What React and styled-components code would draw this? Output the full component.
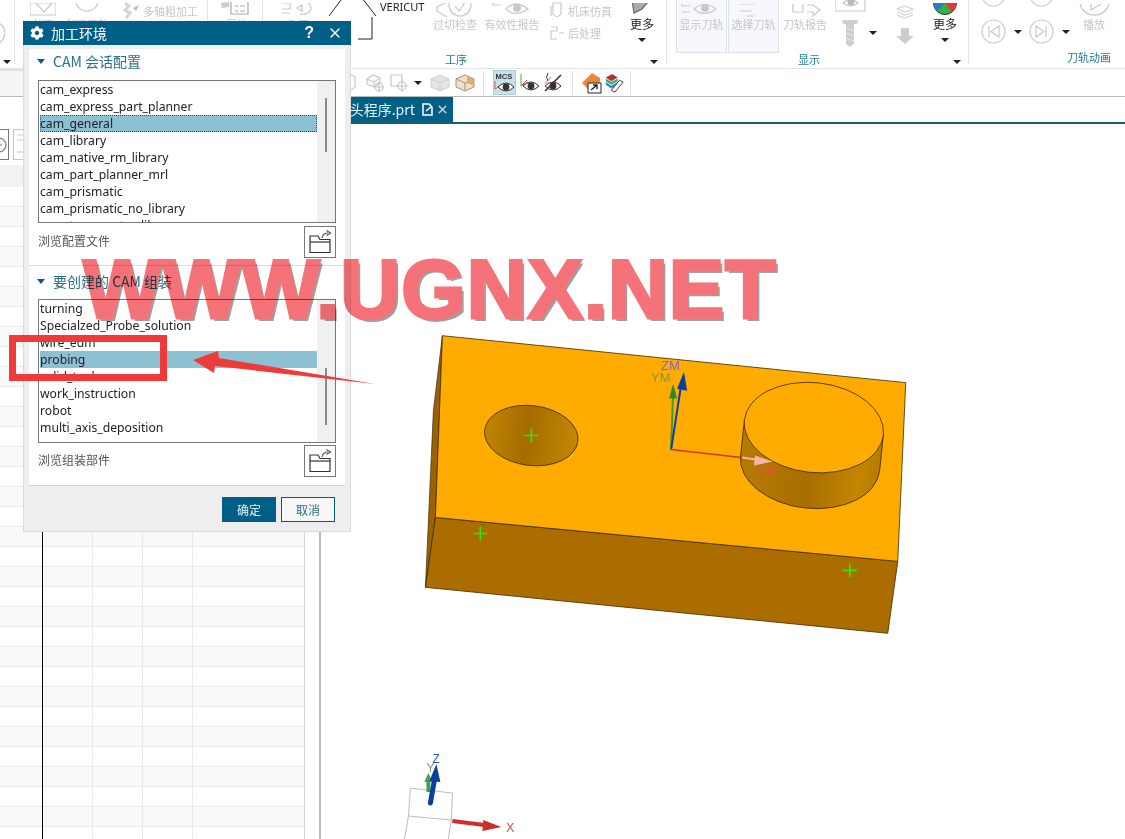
import React from 'react';
import styled, { createGlobalStyle } from 'styled-components';
import { FaCog } from 'react-icons/fa';
import { X } from 'lucide-react';

const FONT = '"Noto Sans", "Noto Sans CJK SC", sans-serif';
const CJK = '"Noto Sans CJK SC", "Noto Sans", sans-serif';

const GlobalStyle = createGlobalStyle`
  html, body { margin: 0; padding: 0; background: #fff; }
  body { font-family: ${FONT}; }
`;

const Page = styled.div`
  position: relative;
  width: 1125px;
  height: 839px;
  overflow: hidden;
  background: #fff;
  display: flex;
  flex-direction: column;
`;

/* ribbon */
const Ribbon = styled.div`
  display: flex;
  height: 68px;
  flex: none;
  overflow: hidden;
  border-bottom: 1px solid #e2e2e2;
  box-sizing: content-box;
`;
const Group = styled.div`
  position: relative;
  width: ${p => p.$w}px;
  flex: none;
  height: 64px;
  border-right: ${p => (p.$last ? 'none' : '1px solid #e4e4e4')};
  box-sizing: border-box;
  display: flex;
  flex-direction: column;
`;
const GroupBody = styled.div`
  display: flex;
  align-items: flex-end;
  height: 52px;
  padding-left: ${p => p.$pad || 0}px;
`;
const GroupLabel = styled.div`
  height: 14px;
  margin-top: 0;
  font: 11px/14px ${CJK};
  color: #1f7a94;
  padding-left: ${p => p.$x}px;
`;
const GroupCaret = styled.span`
  position: absolute;
  right: ${p => p.$r}px;
  bottom: 0;
  width: 0;
  height: 0;
  border: 4px solid transparent;
  border-top: 4px solid #222;
  border-bottom: 0;
`;
const Tool = styled.div`
  width: ${p => p.$w}px;
  margin-left: ${p => p.$ml || 0}px;
  flex: none;
  display: flex;
  flex-direction: column;
  align-items: center;
  padding-bottom: 21px;
  white-space: nowrap;
`;
const ToggledTool = styled(Tool)`
  height: 54px;
  margin-bottom: -1px;
  box-sizing: border-box;
  background: #f6f8fd;
  border: 1px solid #dde3ec;
  justify-content: flex-end;
`;
const ToolLabel = styled.span`
  font: 11px/14px ${CJK};
  color: ${p => (p.$dark ? '#1c1c1c' : '#c6c6c6')};
  white-space: nowrap;
`;
const MoreLabel = styled(ToolLabel)`
  font-size: 12px;
  color: #1c1c1c;
`;
const PlayLabel = styled(ToolLabel)`
  margin-top: 4px;
`;
const ToolStack = styled.div`
  width: ${p => p.$w}px;
  margin-left: ${p => p.$ml || 0}px;
  flex: none;
  display: flex;
  flex-direction: column;
  align-items: ${p => p.$align || 'flex-start'};
  gap: ${p => p.$gap || 0}px;
  padding-bottom: ${p => p.$pb || 0}px;
`;
const StackRow = styled.div`
  display: flex;
  align-items: center;
  gap: ${p => p.$gap || 3}px;
  white-space: nowrap;
`;
const Caret = styled.span`
  width: 0;
  height: 0;
  flex: none;
  margin-left: ${p => p.$ml || 0}px;
  margin-top: ${p => p.$mt || 0}px;
  margin-bottom: ${p => p.$mb || 0}px;
  border: 4px solid transparent;
  border-top: 4px solid #222;
  border-bottom: 0;
`;
const TextTool = styled.span`
  margin-top: 1px;
  align-self: flex-start;
  font: 11px/12px ${FONT};
  color: #1c1c1c;
`;

/* toolbar */
const Toolbar = styled.div`
  display: flex;
  align-items: center;
  height: 27px;
  flex: none;
  border-bottom: 1px solid #b9b9b9;
`;
const ToolbarLead = styled.div`
  width: 345px;
  height: 27px;
  flex: none;
  background: #f5f5f5;
  border-top: 2px solid #e2e2e2;
  box-sizing: border-box;
`;
const BarIcon = styled.span`
  width: ${p => p.$w}px;
  margin-left: ${p => p.$ml || 0}px;
  height: 25px;
  flex: none;
  display: flex;
  align-items: center;
  justify-content: center;
  box-sizing: border-box;
  background: ${p => (p.$on ? '#c7e1ea' : 'transparent')};
  border: ${p => (p.$on ? '1px solid #a9cfda' : 'none')};
`;
const BarSep = styled.span`
  width: 1px;
  height: 24px;
  margin-left: ${p => p.$ml}px;
  flex: none;
  background: #dedede;
`;

/* main area */
const Main = styled.div`
  flex: 1;
  display: flex;
  min-height: 0;
`;
const NavPanel = styled.div`
  width: 321px;
  flex: none;
  border-right: 2px solid #bcbcbc;
  box-sizing: border-box;
  display: flex;
  flex-direction: column;
  overflow: hidden;
`;
const NavTools = styled.div`
  height: 68px;
  flex: none;
  display: flex;
  align-items: flex-end;
  gap: 4px;
  padding-bottom: 5px;
  box-sizing: border-box;
  margin-left: -22px;
`;
const NavButton = styled.span`
  width: ${p => p.$w}px;
  height: 31px;
  box-sizing: border-box;
  border: 1px solid ${p => p.$c};
  display: flex;
  align-items: center;
  justify-content: center;
`;
const NavHeader = styled.div`
  height: 22px;
  flex: none;
  background: #f2f2f2;
`;
const TreeRow = styled.div`
  display: grid;
  grid-template-columns: 43px 50px 50px 50px 112px;
  height: 20px;
  flex: none;
  width: 305px;
  box-sizing: border-box;
  background: ${p => (p.$odd ? '#f9f9f9' : '#fff')};
  border-bottom: 1px solid #e9e9e9;
  border-right: 1px solid #d6d6d6;
`;
const TreeCell = styled.div`
  border-right: 1px solid ${p => (p.$black ? '#000' : '#e9e9e9')};
  margin-bottom: -1px;
  &:last-child { border-right: none; }
`;
const Viewport = styled.div`
  flex: 1;
  display: flex;
  flex-direction: column;
  min-width: 0;
`;
const TabBar = styled.div`
  height: 25px;
  flex: none;
  border-bottom: 2px solid #17616f;
  box-sizing: content-box;
  display: flex;
`;
const FileTab = styled.div`
  width: 132px;
  box-sizing: border-box;
  display: flex;
  align-items: center;
  justify-content: flex-end;
  gap: 3px;
  padding-right: 4px;
  background: #005f87;
  color: #eaf3f6;
  font: 14px/25px ${CJK};
`;
const TabName = styled.span`
  margin-right: 4px;
  white-space: nowrap;
`;
const ModelCanvas = styled.svg`
  display: block;
  width: 804px;
  height: 716px;
`;

/* dialog */
const Dialog = styled.div`
  position: absolute;
  left: 23px;
  top: 21px;
  width: 328px;
  height: 511px;
  box-sizing: border-box;
  background: #eeeeee;
  border: 1px solid #dcdcdc;
  border-top: none;
  display: flex;
  flex-direction: column;
`;
const TitleBar = styled.div`
  height: 24px;
  margin: 0 -1px;
  flex: none;
  background: #005f87;
  color: #fff;
  display: flex;
  align-items: center;
  padding: 0 8px 0 7px;
  gap: 7px;
  font: 14px/24px ${CJK};
`;
const TitleText = styled.span`
  flex: 1;
`;
const HelpMark = styled.span`
  font: bold 16px/24px "Liberation Sans", sans-serif;
  margin-right: 6px;
`;
const DialogPanel = styled.div`
  margin: 4px 5px 0;
  background: #fff;
  flex: none;
  border-bottom: 1px solid #d2d2d2;
`;
const Section = styled.section`
  padding: 0 9px ${p => p.$pb}px 9px;
  border-top: ${p => (p.$divided ? '1px solid #dddddd' : 'none')};
`;
const SectionHead = styled.div`
  height: ${p => p.$h}px;
  display: flex;
  align-items: center;
  gap: 8px;
  padding-bottom: ${p => p.$pb}px;
  box-sizing: border-box;
  font: 14px/18px ${CJK};
  color: #2b7089;
`;
const Triangle = styled.span`
  width: 0;
  height: 0;
  margin-left: -1px;
  border: 4.5px solid transparent;
  border-top: 5px solid #005f87;
  border-bottom: 0;
`;
const ListBox = styled.div`
  height: ${p => p.$h}px;
  box-sizing: border-box;
  border: 1px solid #767676;
  display: flex;
  overflow: hidden;
`;
const ListRows = styled.div`
  flex: 1;
  padding: 0 0 0 1px;
  min-width: 0;
`;
const ListRow = styled.div`
  height: 17px;
  padding-top: 1px;
  box-sizing: border-box;
  font: 12.2px/16px ${FONT};
  color: #222;
  white-space: nowrap;
  background: ${p => (p.$selected ? '#8cc0d2' : 'transparent')};
  outline: ${p => (p.$focus ? '1px dotted #2c5563' : 'none')};
  outline-offset: -1px;
`;
const ScrollTrack = styled.div`
  width: 18px;
  flex: none;
  background: #f0f0f0;
  display: flex;
  flex-direction: column;
  align-items: center;
`;
const ScrollThumb = styled.div`
  width: 2px;
  margin-top: ${p => p.$top}px;
  height: ${p => p.$h}px;
  background: #8a8a8a;
`;
const BrowseRow = styled.div`
  display: flex;
  align-items: center;
  justify-content: space-between;
  padding-top: ${p => p.$top}px;
  color: #555;
`;
const BrowseLabel = styled.span`
  font: 12px/16px ${CJK};
  margin-top: -2px;
`;
const BrowseButton = styled.span`
  width: 32px;
  height: 32px;
  box-sizing: border-box;
  border: 1px solid #777;
  display: flex;
  align-items: center;
  justify-content: center;
`;
const DialogFooter = styled.div`
  display: flex;
  justify-content: flex-end;
  gap: 5px;
  padding: 11px 15px 0 0;
`;
const DialogButton = styled.button`
  width: 54px;
  height: 25px;
  padding: 0;
  box-sizing: border-box;
  border: 1px solid #005f87;
  background: ${p => (p.$primary ? '#005f87' : '#f7f7f7')};
  color: ${p => (p.$primary ? '#e8f1f5' : '#2f6d84')};
  font: 12px/22px ${CJK};
`;

/* annotations painted over the screenshot */
const Watermark = styled.div`
  position: absolute;
  left: 83px;
  top: 248px;
  font: bold 83px/83px "Liberation Sans", sans-serif;
  letter-spacing: 0.95px;
  color: #f47278;
  -webkit-text-stroke: 3px #f47278;
  text-shadow: 3px 3px 0 #a0a0a0;
  white-space: nowrap;
  mix-blend-mode: multiply;
`;
const RedFrame = styled.div`
  position: absolute;
  left: 9px;
  top: 335px;
  width: 158px;
  height: 46px;
  box-sizing: border-box;
  border: 7px solid #ee3a38;
`;
const RedArrow = styled.svg`
  position: absolute;
  left: 190px;
  top: 348px;
  width: 190px;
  height: 40px;
`;
const AnimationRow = styled.div`
  position: absolute;
  left: 12px;
  top: 0;
  display: flex;
  align-items: flex-start;
`;
const AnimationCol = styled.div`
  display: flex;
  flex-direction: column;
  align-items: flex-start;
  gap: 12px;
  margin-top: -8px;
  width: ${p => p.$w}px;
`;
const PlayCol = styled.div`
  display: flex;
  flex-direction: column;
  align-items: center;
  width: 30px;
`;
const PlayIcon = styled.div`
  height: 13px;
`;
const CaretRow = styled.div`
  display: flex;
  align-items: center;
  gap: 8px;
`;

const G = '#c9c9c9';

const Svg = ({ w, h, children, vb }) => (
  <svg width={w} height={h} viewBox={vb || `0 0 ${w} ${h}`} fill="none" stroke={G} strokeWidth="1.2">{children}</svg>
);

const EyeGlyph = ({ x = 0, y = 0, c = '#555', s = 1 }) => (
  <g transform={`translate(${x} ${y}) scale(${s})`}>
    <path d="M0 6 Q8 -2 16 6 Q8 14 0 6 Z" stroke={c} fill="#fff" />
    <circle cx="8" cy="6" r="3.4" fill={c} stroke="none" />
  </g>
);

const BrowseIcon = () => (
  <svg width="24" height="26" viewBox="0 0 24 26" fill="none" stroke="#333" strokeWidth="1.2">
    <path d="M2 23.5 H22 V10.5 H12 L10 7 H2 Z" />
    <path d="M2 13 H22" />
    <path d="M14 9 Q15 4 20 4" stroke="#555" />
    <path d="M18.5 1.5 L22.5 4 L18.5 6.5" stroke="#555" />
  </svg>
);

const MenuCircle = ({ dir }) => (
  <Svg w={25} h={25}>
    <circle cx="12.5" cy="12.5" r="11.5" />
    {dir === 'prev' ? <path d="M8 7 V18 M18 7 L10 12.5 L18 18 Z" /> : <path d="M17 7 V18 M7 7 L15 12.5 L7 18 Z" />}
  </Svg>
);

function AnimationControls() {
  return (
    <AnimationRow>
      <AnimationCol $w={48}>
        <Svg w={25} h={15} vb="0 10 25 15"><circle cx="12.5" cy="12.5" r="11.5" /><path d="M8 10 V16 M18 10 L10 14" /></Svg>
        <CaretRow><MenuCircle dir="prev" /><Caret /></CaretRow>
      </AnimationCol>
      <AnimationCol $w={50}>
        <Svg w={25} h={15} vb="0 10 25 15"><circle cx="12.5" cy="12.5" r="11.5" /><path d="M9 10 V15 M16 10 V15" /></Svg>
        <CaretRow><MenuCircle dir="next" /><Caret /></CaretRow>
      </AnimationCol>
      <PlayCol>
        <PlayIcon>
          <Svg w={31} h={13} vb="0 0 31 13"><path d="M1 0 A15 15 0 0 0 30 0 M12 0 V6 L22 0" /></Svg>
        </PlayIcon>
        <PlayLabel>播放</PlayLabel>
      </PlayCol>
    </AnimationRow>
  );
}

const RibbonArea = () => (
  <Ribbon>
    <Group $w={15}>
      <GroupBody>
        <ToolStack $w={14} $gap={6} $pb={6}>
          <svg width="5" height="26" viewBox="0 0 5 26" fill="none" stroke={G} strokeWidth="1.2"><circle cx="-6" cy="13" r="11" /></svg>
        </ToolStack>
      </GroupBody>
      <GroupCaret $r={3} />
    </Group>
    <Group $w={193}>
      <GroupBody $pad={14}>
        <Tool $w={28}>
          <Svg w={26} h={14}><path d="M0 0 H26 V12 H0 Z M6 0 L14 9 L22 0" /></Svg>
          <ToolLabel>创建</ToolLabel>
        </Tool>
        <Tool $w={48} $ml={6}>
          <Svg w={24} h={14}><path d="M1 0 A11.5 11.5 0 0 0 23 0" /></Svg>
          <ToolLabel>创建刀轨</ToolLabel>
        </Tool>
        <ToolStack $w={76} $ml={10} $pb={33}>
          <StackRow $gap={3}>
            <Svg w={19} h={17}>
              <path d="M4 1 L8 4 L4 8 L9 11 L5 16" strokeWidth="3" stroke="#d4d4d4" />
              <path d="M12 6 L18 3 L15 9 Z" fill="#bbb" stroke="none" />
            </Svg>
            <ToolLabel>多轴粗加工</ToolLabel>
          </StackRow>
        </ToolStack>
      </GroupBody>
    </Group>
    <Group $w={55}>
      <GroupBody $pad={13}>
        <Tool $w={32}>
          <Svg w={32} h={15}>
            <path d="M0 1 L8 0 L8 5 L1 6 Z" fill="#ccc" stroke="none" />
            <path d="M10 0 V12 H27 V0 M14 4 H17 M14 9 H17 M19 4 H24 M19 9 H24" stroke="#aaa" />
          </Svg>
          <ToolLabel>属性</ToolLabel>
        </Tool>
      </GroupBody>
    </Group>
    <Group $w={404}>
      <GroupBody $pad={17}>
        <Tool $w={34}>
          <Svg w={34} h={14}>
            <path d="M2 0 H10 V6 H2 M2 10 H10" />
            <path d="M17 5 L22 2 L22 8 Z M20 11 Q28 13 31 6 Q31 2 28 0" />
          </Svg>
          <ToolLabel>几何</ToolLabel>
        </Tool>
        <ToolStack $w={98} $ml={15} $pb={12}>
          <StackRow $gap={3}>
            <svg width="48" height="40" viewBox="0 0 48 40" fill="none" stroke="#222" strokeWidth="1"><path d="M0 16 L15 -4 M47 16 L33 -2 M43 17 V39 H29" /></svg>
            <TextTool>VERICUT</TextTool>
          </StackRow>
        </ToolStack>
        <Tool $w={44} $ml={6}>
          <Svg w={38} h={14}>
            <path d="M1 4 L9 0 M1 4 V8 L11 14" />
            <circle cx="24" cy="2" r="11" />
            <path d="M19 3 L23 8 L30 -2" />
          </Svg>
          <ToolLabel>过切检查</ToolLabel>
        </Tool>
        <Tool $w={54} $ml={8}>
          <Svg w={40} h={14}>
            <path d="M1 0 V2 H9" />
            <path d="M14 6 Q23 -4 36 6 Q23 15 14 6 Z" />
            <circle cx="25" cy="5" r="4" fill="#c9c9c9" stroke="none" />
          </Svg>
          <ToolLabel>有效性报告</ToolLabel>
        </Tool>
        <ToolStack $w={65} $ml={10} $pb={12} $gap={6}>
          <StackRow $gap={3}>
            <Svg w={16} h={18}><path d="M4 1 H12 V12 Q8 17 4 12 Z M2 4 V14" /></Svg>
            <ToolLabel>机床仿真</ToolLabel>
          </StackRow>
          <StackRow $gap={3}>
            <Svg w={16} h={14}><path d="M2 1 H8 V5 H2 V13 H8 M10 7 H15" /></Svg>
            <ToolLabel>后处理</ToolLabel>
          </StackRow>
        </ToolStack>
        <ToolStack $w={26} $ml={15} $align="center" $pb={10}>
          <Svg w={24} h={14} vb="0 0 24 14">
            <path d="M2 -3 H12 L18 -1 L12 6 L4 10 Z" fill="#aaa" stroke="#666" />
          </Svg>
          <MoreLabel>更多</MoreLabel>
          <Caret $mt={7} />
        </ToolStack>
      </GroupBody>
      <GroupLabel $x={182}>工序</GroupLabel>
      <GroupCaret $r={8} />
    </Group>
    <Group $w={302}>
      <GroupBody $pad={9}>
        <ToggledTool $w={51}>
          <Svg w={44} h={13}>
            <path d="M2 0 V2 H10 M2 8 H10" />
            <path d="M14 5 Q24 -4 36 5 Q24 14 14 5 Z" />
            <circle cx="25" cy="4" r="4" fill="#c9c9c9" stroke="none" />
          </Svg>
          <ToolLabel>显示刀轨</ToolLabel>
        </ToggledTool>
        <ToggledTool $w={51} $ml={1}>
          <Svg w={44} h={13}><path d="M8 0 H22 M8 7 H20 M14 12 H22" /></Svg>
          <ToolLabel>选择刀轨</ToolLabel>
        </ToggledTool>
        <Tool $w={44} $ml={4}>
          <Svg w={36} h={13}>
            <path d="M6 0 V8 H16 V0 M20 1 H26 L33 6 L26 12 V8 H20" />
          </Svg>
          <ToolLabel>刀轨报告</ToolLabel>
        </Tool>
        <ToolStack $w={32} $ml={8} $gap={8} $pb={5}>
          <svg width="31" height="13" viewBox="0 0 31 13" fill="none" stroke={G} strokeWidth="1.2">
            <path d="M0 0 V12 H30 V0" />
            <path d="M8 4 Q16 -3 23 4 Q16 10 8 4 Z" />
            <circle cx="16" cy="3" r="3.5" fill="#bbb" stroke="none" />
          </svg>
          <svg width="31" height="27" viewBox="0 0 31 27">
            <path d="M7 0 H23 L22 4 H19 V24 L15 27 L11 24 V4 H8 Z" fill="#cfcfcf" />
            <path d="M11 8 L19 11 M11 13 L19 16 M11 18 L19 21" stroke="#e8e8e8" />
          </svg>
        </ToolStack>
        <Caret $ml={2} $mb={17} />
        <ToolStack $w={28} $ml={14} $align="center" $gap={8} $pb={8}>
          <Svg w={18} h={15}>
            <path d="M9 1 L17 4 L9 7 L1 4 Z M1 7 L9 10 L17 7 M1 10 L9 13 L17 10" stroke="#d4d4d4" />
          </Svg>
          <svg width="18" height="16" viewBox="0 0 18 16">
            <path d="M5 0 H13 V8 H18 L9 16 L0 8 H5 Z" fill="#cdcdcd" />
          </svg>
        </ToolStack>
        <ToolStack $w={26} $ml={13} $align="center" $pb={10}>
          <svg width="24" height="14" viewBox="0 0 24 14">
            <circle cx="12" cy="0" r="11.5" fill="#2fb34a" stroke="#333" />
            <path d="M12 0 L23 -3 A11.5 11.5 0 0 1 19 9 Z" fill="#e33" />
            <path d="M12 0 L4 8 A11.5 11.5 0 0 1 1 -3 Z" fill="#2a78c8" />
          </svg>
          <MoreLabel>更多</MoreLabel>
          <Caret $mt={7} />
        </ToolStack>
      </GroupBody>
      <GroupLabel $x={131}>显示</GroupLabel>
      <GroupCaret $r={7} />
    </Group>
    <Group $w={156} $last>
      <GroupBody />
      <GroupLabel $x={98}>刀轨动画</GroupLabel>
      <AnimationControls />
    </Group>
  </Ribbon>
);

const ToolbarArea = () => (
  <Toolbar>
    <ToolbarLead />
    <BarIcon $w={18}><Svg w={14} h={20}><path d="M1 0 L8 4 V14 L1 19" /></Svg></BarIcon>
    <BarIcon $w={24}>
      <Svg w={20} h={20}><path d="M2 6 L8 2 L15 5 V10 L9 14 L2 11 Z M2 6 L9 9 L15 5 M9 9 V14" /><circle cx="14" cy="14" r="4" /><path d="M14 8 V19 M9 14 H19" /></Svg>
    </BarIcon>
    <BarIcon $w={24}>
      <Svg w={20} h={20}><path d="M2 2 H13 V13 H2 Z" /><circle cx="13" cy="13" r="4" fill="#fff" /><path d="M13 7 V19 M7 13 H19" /></Svg>
    </BarIcon>
    <BarIcon $w={14}><Caret /></BarIcon>
    <BarIcon $w={24} $ml={3}>
      <svg width="20" height="20" viewBox="0 0 20 20" stroke="#d0d0d0"><path d="M1 6 L10 2 L19 6 V14 L10 18 L1 14 Z" fill="#e4e4e4" /><path d="M1 6 L10 10 L19 6 M10 10 V18" fill="none" /></svg>
    </BarIcon>
    <BarIcon $w={26}>
      <svg width="20" height="20" viewBox="0 0 20 20" stroke="#9b9488" fill="none"><path d="M1 6 L10 2 L19 6 V14 L10 18 L1 14 Z" fill="#f0e0c8" /><path d="M1 6 L10 10 L19 6 M10 10 V18" /><path d="M12 4 L19 6 V13 L12 10 Z" fill="#e8a860" stroke="none" /></svg>
    </BarIcon>
    <BarSep $ml={5} />
    <BarIcon $w={23} $ml={9} $on>
      <svg width="21" height="23" viewBox="0 0 21 23" fill="none">
        <text x="1.5" y="8" fontFamily="Liberation Sans" fontSize="7.5" fontWeight="bold" fill="#333">MCS</text>
        <path d="M1 10 V18 L7 14" stroke="#d33" strokeWidth="0.8" />
        <EyeGlyph x={4} y={10} c="#333" />
      </svg>
    </BarIcon>
    <BarIcon $w={24} $ml={1}>
      <svg width="22" height="22" viewBox="0 0 22 22" fill="none">
        <path d="M3 2 V14 L10 10" stroke="#3a3" strokeWidth="0.9" />
        <path d="M3 14 L9 8" stroke="#d33" strokeWidth="0.9" />
        <EyeGlyph x={5} y={8} c="#333" />
      </svg>
    </BarIcon>
    <BarIcon $w={24}>
      <svg width="22" height="22" viewBox="0 0 22 22" fill="none">
        <path d="M6 1 Q3 5 6 9" stroke="#444" />
        <EyeGlyph x={3} y={8} c="#333" />
        <path d="M3 19 L19 3" stroke="#333" strokeWidth="1.6" />
        <path d="M3 12 L9 5" stroke="#d33" strokeWidth="0.8" />
      </svg>
    </BarIcon>
    <BarSep $ml={7} />
    <BarIcon $w={24} $ml={7}>
      <svg width="22" height="22" viewBox="0 0 22 22">
        <path d="M1 11 L11 1 L19 6 V10 L10 20 Z" fill="#e9873a" />
        <path d="M7 11 H20 V21 H7 Z" fill="#fff" stroke="#222" />
        <path d="M10 18 L16 13 M12 13 H16 V17" stroke="#222" fill="none" strokeWidth="1.4" />
      </svg>
    </BarIcon>
    <BarIcon $w={20}>
      <svg width="22" height="22" viewBox="0 0 22 22">
        <path d="M2 5 L9 1 L15 5 L8 9 Z" fill="#a33" />
        <path d="M2 6 L8 10 L15 6 V9 L8 13 L2 9 Z" fill="#3a7" />
        <path d="M2 10 L8 14 L15 10 V13 L8 17 L2 13 Z" fill="#38c" />
        <path d="M8 19 L12 21 L21 10 L17 8 Z" fill="#fff" stroke="#333" />
      </svg>
    </BarIcon>
    <BarSep $ml={6} />
  </Toolbar>
);

const NavArea = () => (
  <NavPanel>
    <NavTools>
      <NavButton $w={31} $c="#777">
        <Svg w={26} h={26}><circle cx="18" cy="13" r="7" stroke="#777" /><path d="M15 13 H21 M18 10 V16" stroke="#777" /></Svg>
      </NavButton>
      <NavButton $w={30} $c="#c4c4c4">
        <Svg w={26} h={26}><path d="M2 3 H24 V20 H2 M2 8 H24" /></Svg>
      </NavButton>
    </NavTools>
    <NavHeader />
    {Array.from({ length: 33 }, (_, row) => (
      <TreeRow key={row} $odd={row % 2 === 1}>
        <TreeCell $black />
        <TreeCell />
        <TreeCell />
        <TreeCell />
        <TreeCell />
      </TreeRow>
    ))}
  </NavPanel>
);

const Plus = ({ x, y }) => (
  <path d={`M${x - 7} ${y} H${x + 7} M${x} ${y - 7} V${y + 7}`} stroke="#2fe80c" strokeWidth="1.6" />
);

const ModelView = () => (
  <ModelCanvas viewBox="321 123 804 716" fill="none">
    <defs>
      <linearGradient id="holeFill" x1="0" x2="1" y1="0" y2="0">
        <stop offset="0" stopColor="#c08400" />
        <stop offset="0.45" stopColor="#a56c00" />
        <stop offset="1" stopColor="#c48800" />
      </linearGradient>
      <linearGradient id="bossFill" x1="0" x2="1" y1="0" y2="0">
        <stop offset="0" stopColor="#b67c00" />
        <stop offset="0.5" stopColor="#a86e00" />
        <stop offset="0.85" stopColor="#c48600" />
        <stop offset="1" stopColor="#b67c00" />
      </linearGradient>
    </defs>
    <path d="M442 335 L433 410 L425 587 L435 517 Z" fill="#9a6300" stroke="#3d2a00" strokeWidth="0.7" />
    <path d="M435 517 L898 561 L888 633 L425 587 Z" fill="#ab6c00" stroke="#3d2a00" strokeWidth="0.8" />
    <path d="M442 335 L906 382 L898 561 L435 517 Z" fill="#ffab00" stroke="#3d2a00" strokeWidth="0.8" />
    <g transform="rotate(7 531 435)">
      <ellipse cx="531" cy="435" rx="47" ry="30" fill="url(#holeFill)" stroke="#3d2a00" strokeWidth="0.8" />
    </g>
    <g transform="rotate(6 814 427)">
      <path d="M744 427 V463 A70 45 0 0 0 884 463 V427 Z" fill="url(#bossFill)" stroke="#3d2a00" strokeWidth="0.8" />
      <ellipse cx="814" cy="427" rx="70" ry="45" fill="#ffab00" stroke="#3d2a00" strokeWidth="0.8" />
    </g>
    <Plus x={531} y={435} />
    <Plus x={480} y={533} />
    <Plus x={850} y={570} />
    <path d="M671 449 L673 392" stroke="#3f9a2a" strokeWidth="2" />
    <path d="M673 383 L677 398 L669 398 Z" fill="#2f8a22" />
    <path d="M671 449 L681 385" stroke="#0b3f9e" strokeWidth="2" />
    <path d="M684 371 L687 390 L677 388 Z" fill="#0b3f9e" />
    <path d="M671 449 L750 458" stroke="#d8321e" strokeWidth="1.4" />
    <path d="M773 461 L754 465 L755 455 Z" fill="#f4b4a8" />
    <path d="M742 457 L756 459" stroke="#f4b4a8" strokeWidth="2" />
    <text x="661" y="369" fontFamily="Liberation Sans" fontSize="13" fill="#7d68d0">ZM</text>
    <text x="651" y="381" fontFamily="Liberation Sans" fontSize="13" fill="#7f9d3a">YM</text>
    <text x="758" y="475" fontFamily="Liberation Sans" fontSize="13" fill="#e8503c">XM</text>

    <path d="M410 788 L452 793 L451 820 L408 816 Z M408 816 L404 839 M451 820 L448 839" stroke="#bdbdbd" />
    <path d="M428 792 V778" stroke="#3da44a" strokeWidth="4" />
    <path d="M428 773 L432 782 L424 782 Z" fill="#3da44a" />
    <path d="M430 803 L434 780" stroke="#0b3f9e" strokeWidth="5" strokeLinecap="round" />
    <path d="M436 764 L440 782 L429 781 Z" fill="#0b3f9e" />
    <path d="M452 821 L484 825" stroke="#c9302c" strokeWidth="4" />
    <path d="M501 827 L482 831 L483 820 Z" fill="#c9302c" />
    <text x="432" y="763" fontFamily="Liberation Sans" fontSize="12" fill="#2c5fc0">Z</text>
    <text x="426" y="772" fontFamily="Liberation Sans" fontSize="12" fill="#6fa76f">Y</text>
    <text x="506" y="832" fontFamily="Liberation Sans" fontSize="12" fill="#c9504c">X</text>
  </ModelCanvas>
);

const listOne = [
  'cam_express',
  'cam_express_part_planner',
  'cam_general',
  'cam_library',
  'cam_native_rm_library',
  'cam_part_planner_mrl',
  'cam_prismatic',
  'cam_prismatic_no_library',
  'cam_teamcenter_library',
];
const listTwo = [
  'turning',
  'Specialzed_Probe_solution',
  'wire_edm',
  'probing',
  'solid_tool',
  'work_instruction',
  'robot',
  'multi_axis_deposition',
];

const MachiningDialog = () => (
  <Dialog>
    <TitleBar>
      <FaCog size={14} />
      <TitleText>加工环境</TitleText>
      <HelpMark>?</HelpMark>
      <X size={16} strokeWidth={2} />
    </TitleBar>
    <DialogPanel>
      <Section $pb={7}>
        <SectionHead $h={31} $pb={7}>
          <Triangle />
          CAM 会话配置
        </SectionHead>
        <ListBox $h={143}>
          <ListRows>
            {listOne.map(name => (
              <ListRow key={name} $selected={name === 'cam_general'} $focus={name === 'cam_general'}>{name}</ListRow>
            ))}
          </ListRows>
          <ScrollTrack>
            <ScrollThumb $top={17} $h={54} />
          </ScrollTrack>
        </ListBox>
        <BrowseRow $top={3}>
          <BrowseLabel>浏览配置文件</BrowseLabel>
          <BrowseButton><BrowseIcon /></BrowseButton>
        </BrowseRow>
      </Section>
      <Section $divided $pb={8}>
        <SectionHead $h={33} $pb={3}>
          <Triangle />
          要创建的 CAM 组装
        </SectionHead>
        <ListBox $h={144}>
          <ListRows>
            {listTwo.map(name => (
              <ListRow key={name} $selected={name === 'probing'}>{name}</ListRow>
            ))}
          </ListRows>
          <ScrollTrack>
            <ScrollThumb $top={68} $h={57} />
          </ScrollTrack>
        </ListBox>
        <BrowseRow $top={2}>
          <BrowseLabel>浏览组装部件</BrowseLabel>
          <BrowseButton><BrowseIcon /></BrowseButton>
        </BrowseRow>
      </Section>
    </DialogPanel>
    <DialogFooter>
      <DialogButton $primary>确定</DialogButton>
      <DialogButton>取消</DialogButton>
    </DialogFooter>
  </Dialog>
);

export default function App() {
  return (
    <Page>
      <GlobalStyle />
      <RibbonArea />
      <ToolbarArea />
      <Main>
        <NavArea />
        <Viewport>
          <TabBar>
            <FileTab>
              <TabName>探头程序.prt</TabName>
              <Svg w={11} h={13} vb="0 0 11 13"><path d="M1 1 H7 L10 4 V12 H1 Z M4 8 L10 3" stroke="#fff" strokeWidth="1.5" /></Svg>
              <X size={13} strokeWidth={3} color="#b9d3de" />
            </FileTab>
          </TabBar>
          <ModelView />
        </Viewport>
      </Main>
      <MachiningDialog />
      <Watermark>WWW.UGNX.NET</Watermark>
      <RedFrame />
      <RedArrow viewBox="190 348 190 40">
        <path d="M193 360 L218 351 L219 358 L375 384 L215 366 L214 373 Z" fill="#ee3a38" />
      </RedArrow>
    </Page>
  );
}
